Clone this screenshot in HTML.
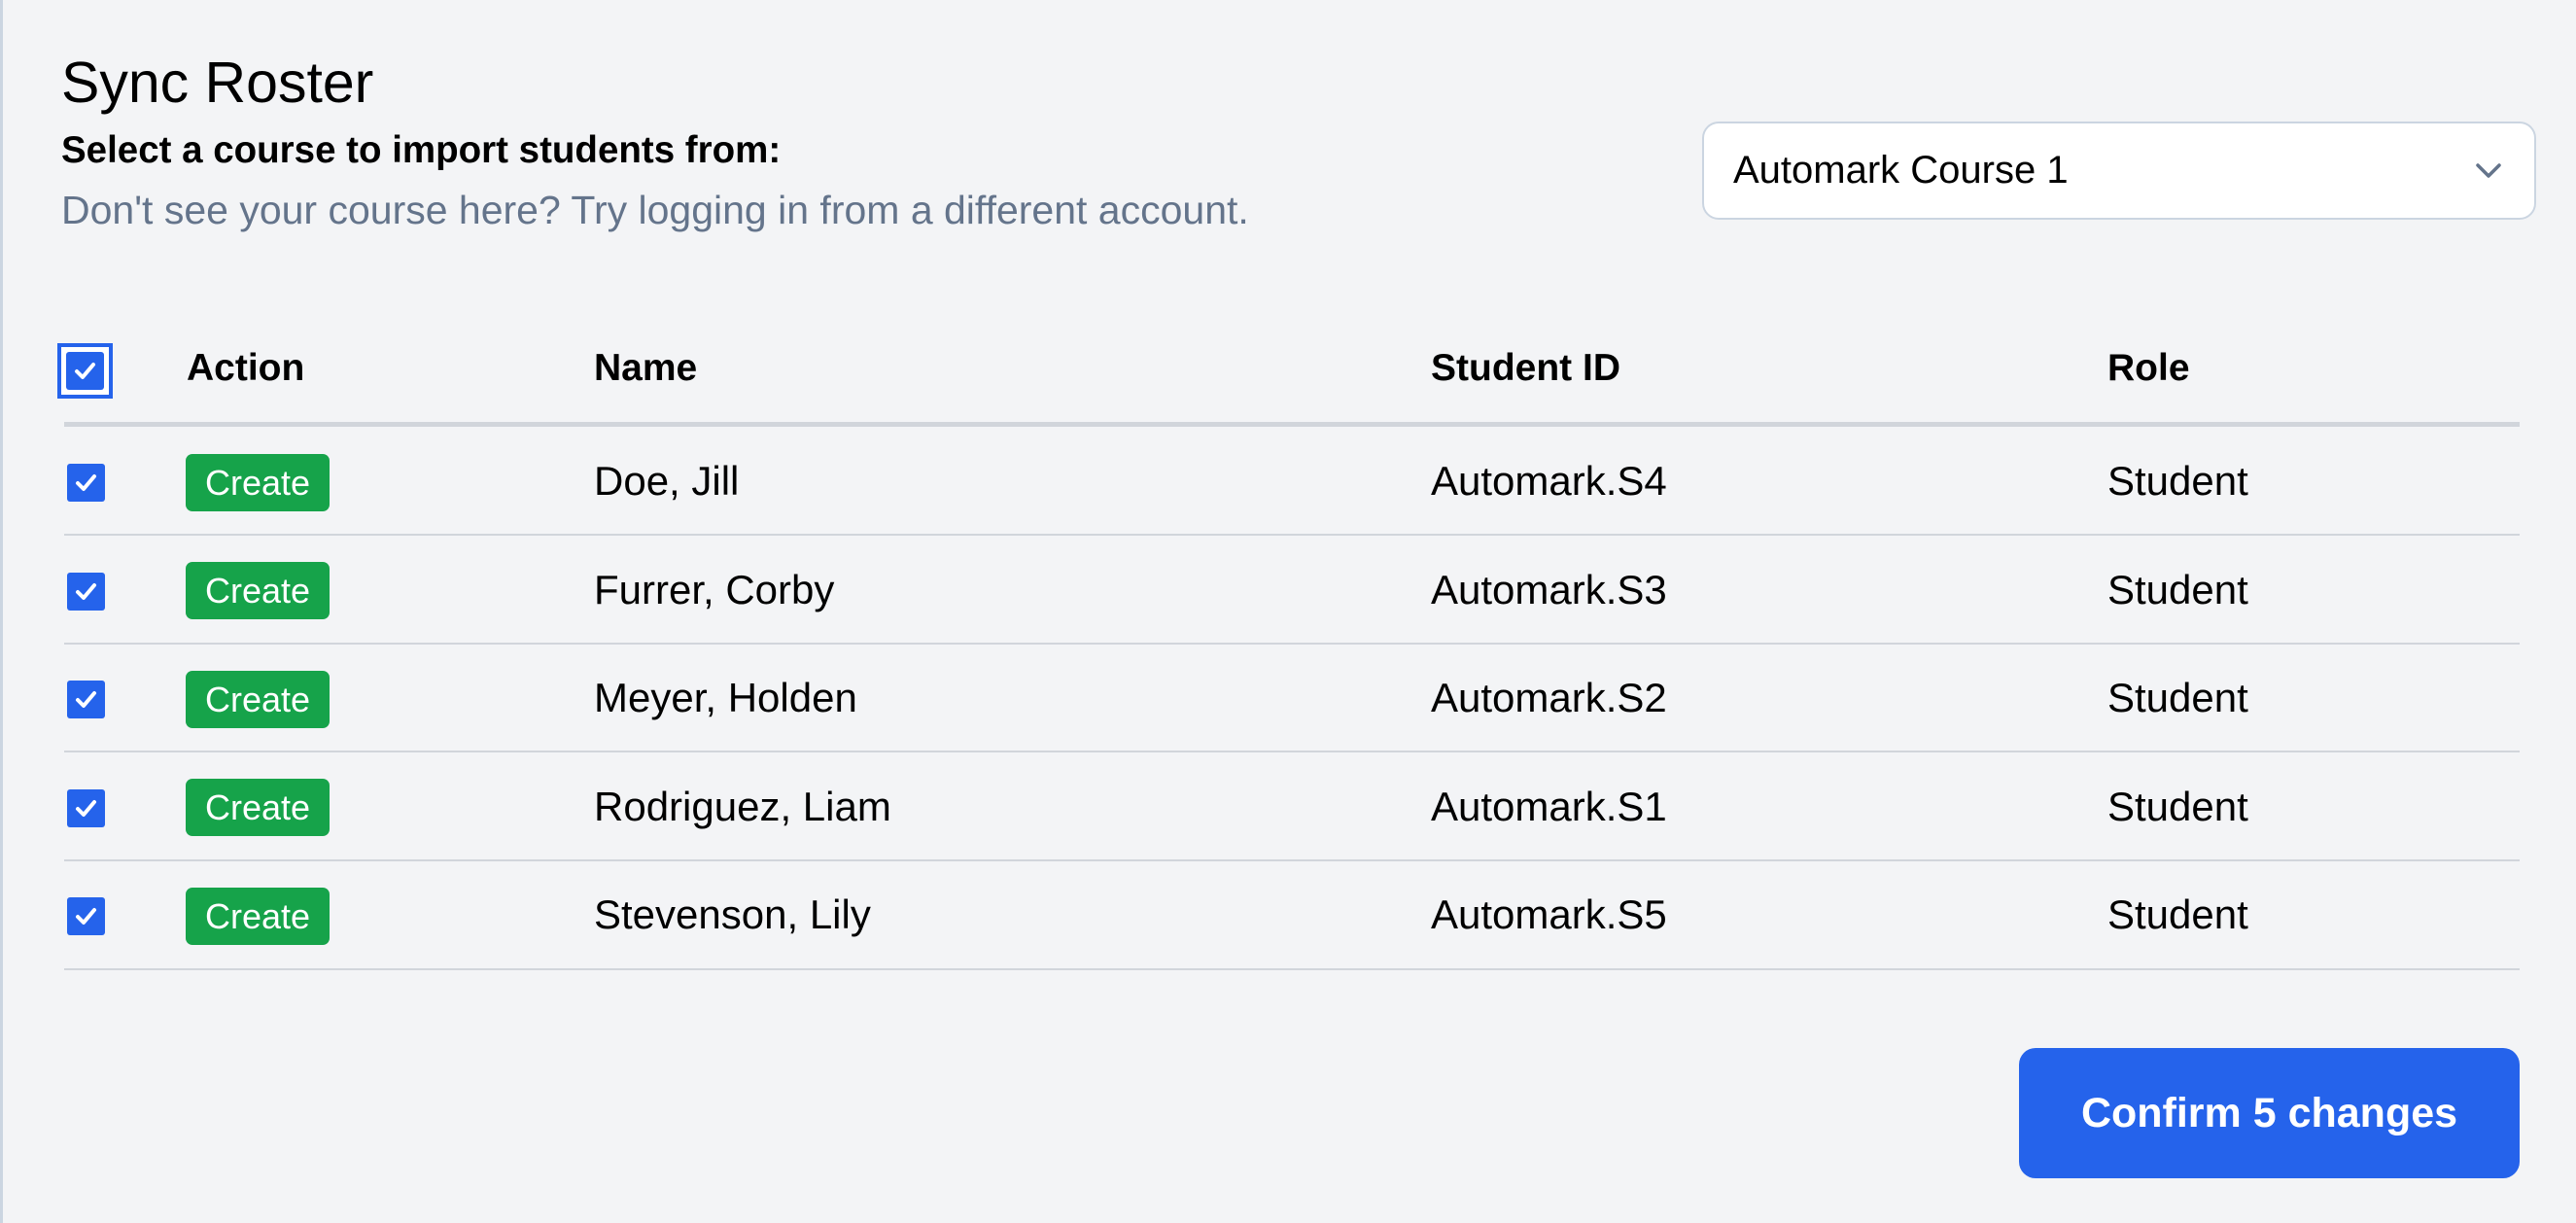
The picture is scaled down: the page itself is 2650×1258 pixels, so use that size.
<!DOCTYPE html>
<html><head><meta charset="utf-8"><style>
*{box-sizing:border-box;margin:0;padding:0}
html,body{width:2650px;height:1258px;overflow:hidden;background:#f3f4f6;font-family:"Liberation Sans",sans-serif;color:#000}
body{position:relative;border-left:3px solid #cbd5e1}
.a{position:absolute;white-space:nowrap}
h1{position:absolute;left:60px;top:50px;font-size:59px;font-weight:normal;line-height:70px}
.sel{left:1748px;top:125px;width:858px;height:101px;background:#fff;border:2px solid #cbd5e1;border-radius:17px}
.cb{position:absolute;width:39px;height:39px;background:#2563eb;border-radius:3px}
.cb svg{position:absolute;left:0;top:0}
.th{font-size:39px;font-weight:bold;top:355px;line-height:48px}
.td{font-size:42px;line-height:50px}
.hr{position:absolute;left:63px;width:2526px;height:2px;background:#d1d5db}
.badge{position:absolute;left:188px;width:148px;height:59px;background:#16a34a;border-radius:7px;color:#fff;font-size:36px;text-align:center;line-height:59px}
.btn{left:2074px;top:1078px;width:515px;height:134px;background:#2563eb;border-radius:17px;color:#fff;font-weight:bold;font-size:43px;text-align:center;line-height:134px}
</style></head><body>
<h1>Sync Roster</h1>
<div class="a" style="left:60px;top:134px;font-size:38.5px;font-weight:bold;line-height:42px">Select a course to import students from:</div>
<div class="a" style="left:60px;top:193px;font-size:41px;color:#64748b;line-height:46px">Don't see your course here? Try logging in from a different account.</div>
<div class="a sel"><div class="a" style="left:30px;top:24px;font-size:40px;line-height:48px">Automark Course 1</div>
<svg class="a" style="left:792px;top:36px" width="30" height="24" viewBox="0 0 30 24"><path d="M4 7l11 11L26 7" stroke="#64748b" stroke-width="3.5" fill="none" stroke-linecap="round" stroke-linejoin="round"/></svg></div>

<div class="a" style="left:56px;top:353px;width:57px;height:57px;border:4px solid #2563eb;background:#fff"></div>
<div class="cb" style="left:65px;top:362px"><svg width="39" height="39" viewBox="0 0 39 39"><path d="M11 20l6 6 11-13" stroke="#fff" stroke-width="4" fill="none" stroke-linecap="round" stroke-linejoin="round"/></svg></div>
<div class="a th" style="left:189px">Action</div>
<div class="a th" style="left:608px">Name</div>
<div class="a th" style="left:1469px">Student ID</div>
<div class="a th" style="left:2165px">Role</div>
<div class="hr" style="top:434px;height:5px"></div>

<div class="cb" style="left:66px;top:477px"><svg width="39" height="39" viewBox="0 0 39 39"><path d="M11 20l6 6 11-13" stroke="#fff" stroke-width="4" fill="none" stroke-linecap="round" stroke-linejoin="round"/></svg></div>
<div class="badge" style="top:467px">Create</div>
<div class="a td" style="left:608px;top:470px">Doe, Jill</div>
<div class="a td" style="left:1469px;top:470px">Automark.S4</div>
<div class="a td" style="left:2165px;top:470px">Student</div>
<div class="hr" style="top:549px"></div>

<div class="cb" style="left:66px;top:589px"><svg width="39" height="39" viewBox="0 0 39 39"><path d="M11 20l6 6 11-13" stroke="#fff" stroke-width="4" fill="none" stroke-linecap="round" stroke-linejoin="round"/></svg></div>
<div class="badge" style="top:578px">Create</div>
<div class="a td" style="left:608px;top:582px">Furrer, Corby</div>
<div class="a td" style="left:1469px;top:582px">Automark.S3</div>
<div class="a td" style="left:2165px;top:582px">Student</div>
<div class="hr" style="top:661px"></div>

<div class="cb" style="left:66px;top:700px"><svg width="39" height="39" viewBox="0 0 39 39"><path d="M11 20l6 6 11-13" stroke="#fff" stroke-width="4" fill="none" stroke-linecap="round" stroke-linejoin="round"/></svg></div>
<div class="badge" style="top:690px">Create</div>
<div class="a td" style="left:608px;top:693px">Meyer, Holden</div>
<div class="a td" style="left:1469px;top:693px">Automark.S2</div>
<div class="a td" style="left:2165px;top:693px">Student</div>
<div class="hr" style="top:772px"></div>

<div class="cb" style="left:66px;top:812px"><svg width="39" height="39" viewBox="0 0 39 39"><path d="M11 20l6 6 11-13" stroke="#fff" stroke-width="4" fill="none" stroke-linecap="round" stroke-linejoin="round"/></svg></div>
<div class="badge" style="top:801px">Create</div>
<div class="a td" style="left:608px;top:805px">Rodriguez, Liam</div>
<div class="a td" style="left:1469px;top:805px">Automark.S1</div>
<div class="a td" style="left:2165px;top:805px">Student</div>
<div class="hr" style="top:884px"></div>

<div class="cb" style="left:66px;top:923px"><svg width="39" height="39" viewBox="0 0 39 39"><path d="M11 20l6 6 11-13" stroke="#fff" stroke-width="4" fill="none" stroke-linecap="round" stroke-linejoin="round"/></svg></div>
<div class="badge" style="top:913px">Create</div>
<div class="a td" style="left:608px;top:916px">Stevenson, Lily</div>
<div class="a td" style="left:1469px;top:916px">Automark.S5</div>
<div class="a td" style="left:2165px;top:916px">Student</div>
<div class="hr" style="top:996px"></div>

<div class="a btn">Confirm 5 changes</div>
</body></html>
